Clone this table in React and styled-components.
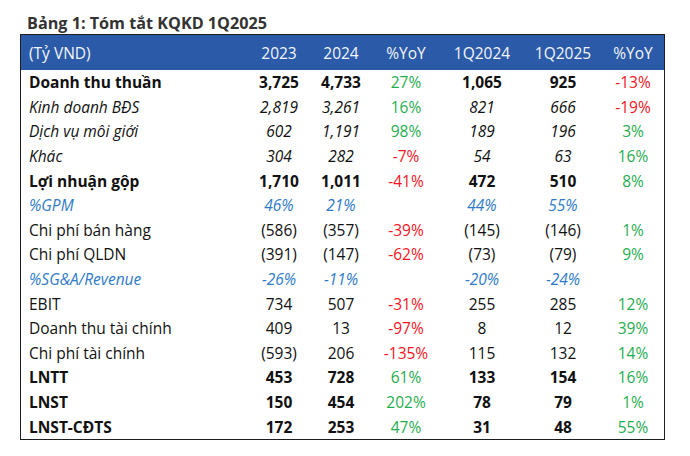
import React from 'react';
import styled, { createGlobalStyle } from 'styled-components';

const GlobalStyle = createGlobalStyle`
  html, body {
    margin: 0;
    padding: 0;
    background: #ffffff;
  }
  body {
    font-family: 'Open Sans', 'Noto Sans', sans-serif;
  }
`;

const Page = styled.div`
  width: 690px;
  height: 456px;
  padding: 9px 0 0 20px;
  box-sizing: border-box;
`;

const Title = styled.div`
  font-size: 16.2px;
  font-weight: 700;
  color: #333333;
  padding: 3px 0 0 7px;
  height: 22px;
  line-height: 22px;
`;

const Table = styled.div`
  width: 645px;
  border: 1px solid #1e1e1e;
  box-sizing: border-box;
`;

const COLS = '227px 62px 62px 68px 84px 78px 62px';

const HeaderRow = styled.div`
  display: grid;
  grid-template-columns: ${COLS};
  height: 35px;
  align-items: center;
  background: #2b5ba8;
  color: #f4f6fb;
  font-size: 15.5px;
`;

const Row = styled.div`
  display: grid;
  grid-template-columns: ${COLS};
  height: 24.6px;
  align-items: center;
  font-size: 15.5px;
  color: ${p => (p.$tone === 'blue' ? '#2f7bc9' : '#111111')};
  font-weight: ${p => (p.$bold ? 700 : 400)};
  font-style: ${p => (p.$italic ? 'italic' : 'normal')};
`;

const Label = styled.div`
  padding-left: 8px;
  white-space: nowrap;
`;

const Cell = styled.div`
  text-align: center;
  white-space: nowrap;
`;

const Pct = styled.div`
  text-align: center;
  white-space: nowrap;
  font-weight: 400;
  font-style: normal;
  color: ${p => (p.$neg ? '#f5141e' : '#1fae4f')};
`;

const rows = [
  { label: 'Doanh thu thuần', bold: true, v: ['3,725', '4,733', '27%', '1,065', '925', '-13%'] },
  { label: 'Kinh doanh BĐS', italic: true, v: ['2,819', '3,261', '16%', '821', '666', '-19%'] },
  { label: 'Dịch vụ môi giới', italic: true, v: ['602', '1,191', '98%', '189', '196', '3%'] },
  { label: 'Khác', italic: true, v: ['304', '282', '-7%', '54', '63', '16%'] },
  { label: 'Lợi nhuận gộp', bold: true, v: ['1,710', '1,011', '-41%', '472', '510', '8%'] },
  { label: '%GPM', italic: true, tone: 'blue', v: ['46%', '21%', '', '44%', '55%', ''] },
  { label: 'Chi phí bán hàng', v: ['(586)', '(357)', '-39%', '(145)', '(146)', '1%'] },
  { label: 'Chi phí QLDN', v: ['(391)', '(147)', '-62%', '(73)', '(79)', '9%'] },
  { label: '%SG&A/Revenue', italic: true, tone: 'blue', v: ['-26%', '-11%', '', '-20%', '-24%', ''] },
  { label: 'EBIT', v: ['734', '507', '-31%', '255', '285', '12%'] },
  { label: 'Doanh thu tài chính', v: ['409', '13', '-97%', '8', '12', '39%'] },
  { label: 'Chi phí tài chính', v: ['(593)', '206', '-135%', '115', '132', '14%'] },
  { label: 'LNTT', bold: true, v: ['453', '728', '61%', '133', '154', '16%'] },
  { label: 'LNST', bold: true, v: ['150', '454', '202%', '78', '79', '1%'] },
  { label: 'LNST-CĐTS', bold: true, v: ['172', '253', '47%', '31', '48', '55%'] },
];

const headers = ['2023', '2024', '%YoY', '1Q2024', '1Q2025', '%YoY'];

const PctCell = ({ value }) =>
  value ? <Pct $neg={value.startsWith('-')}>{value}</Pct> : <Cell />;

export default function App() {
  return (
    <Page>
      <GlobalStyle />
      <Title>Bảng 1: Tóm tắt KQKD 1Q2025</Title>
      <Table>
        <HeaderRow>
          <Label>(Tỷ VND)</Label>
          {headers.map((h, i) => (
            <Cell key={i}>{h}</Cell>
          ))}
        </HeaderRow>
        {rows.map(r => {
          const pctTone = r.tone !== 'blue';
          return (
            <Row key={r.label} $bold={r.bold} $italic={r.italic} $tone={r.tone}>
              <Label>{r.label}</Label>
              <Cell>{r.v[0]}</Cell>
              <Cell>{r.v[1]}</Cell>
              {pctTone ? <PctCell value={r.v[2]} /> : <Cell>{r.v[2]}</Cell>}
              <Cell>{r.v[3]}</Cell>
              <Cell>{r.v[4]}</Cell>
              {pctTone ? <PctCell value={r.v[5]} /> : <Cell>{r.v[5]}</Cell>}
            </Row>
          );
        })}
      </Table>
    </Page>
  );
}
